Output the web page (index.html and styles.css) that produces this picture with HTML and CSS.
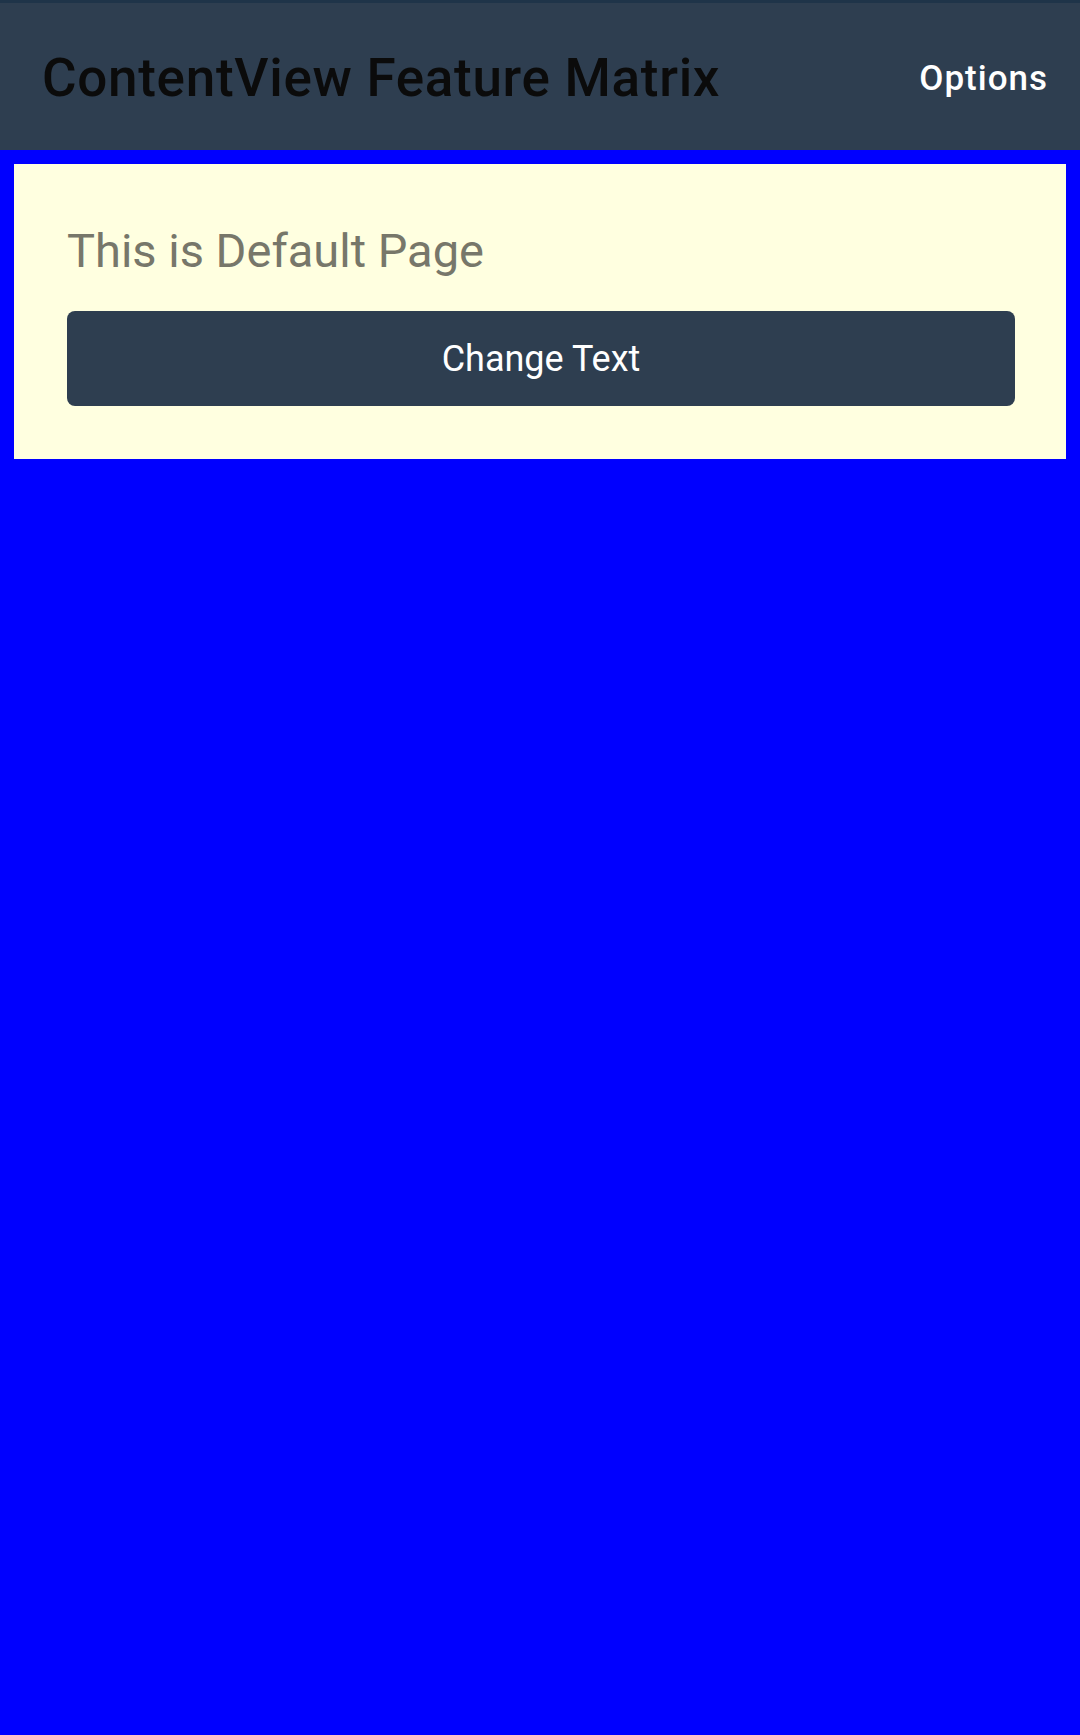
FILE: index.html
```html
<!DOCTYPE html>
<html>
<head>
<meta charset="utf-8">
<link rel="stylesheet" href="styles.css">
</head>
<body>
<header class="topbar">
  <h1 class="title">ContentView Feature Matrix</h1>
  <span class="options">Options</span>
</header>
<main class="page">
  <section class="card">
    <p class="label">This is Default Page</p>
    <button class="btn">Change Text</button>
  </section>
</main>
</body>
</html>
```

FILE: styles.css
```css
html, body {
  margin: 0;
  padding: 0;
}
body {
  width: 1080px;
  height: 1735px;
  background: #0000ff;
  font-family: Roboto, "Noto Sans", "Liberation Sans", sans-serif;
  display: flex;
  flex-direction: column;
}
.topbar {
  box-sizing: border-box;
  height: 150px;
  border-top: 3px solid #1f3449;
  background: #2e3e50;
  display: flex;
  align-items: center;
  justify-content: space-between;
  padding: 0 32px 0 42px;
}
.title {
  margin: 0;
  font-size: 53px;
  font-weight: 500;
  letter-spacing: 0.7px;
  color: #0b0b0b;
  line-height: 1;
  position: relative;
  top: 2px;
}
.options {
  font-size: 35px;
  font-weight: 500;
  letter-spacing: 1px;
  color: #ffffff;
  position: relative;
  top: 2px;
}
.page {
  padding: 14px;
}
.card {
  background: #ffffe0;
  padding: 59px 51px 53px 53px;
  display: flex;
  flex-direction: column;
}
.label {
  margin: 0 0 32px 0;
  font-size: 47px;
  line-height: 56px;
  color: #77776a;
}
.btn {
  height: 95px;
  border: none;
  border-radius: 8px;
  background: #2e3e50;
  color: #ffffff;
  font-family: Roboto, "Noto Sans", "Liberation Sans", sans-serif;
  font-size: 36px;
  padding: 0;
}
```
